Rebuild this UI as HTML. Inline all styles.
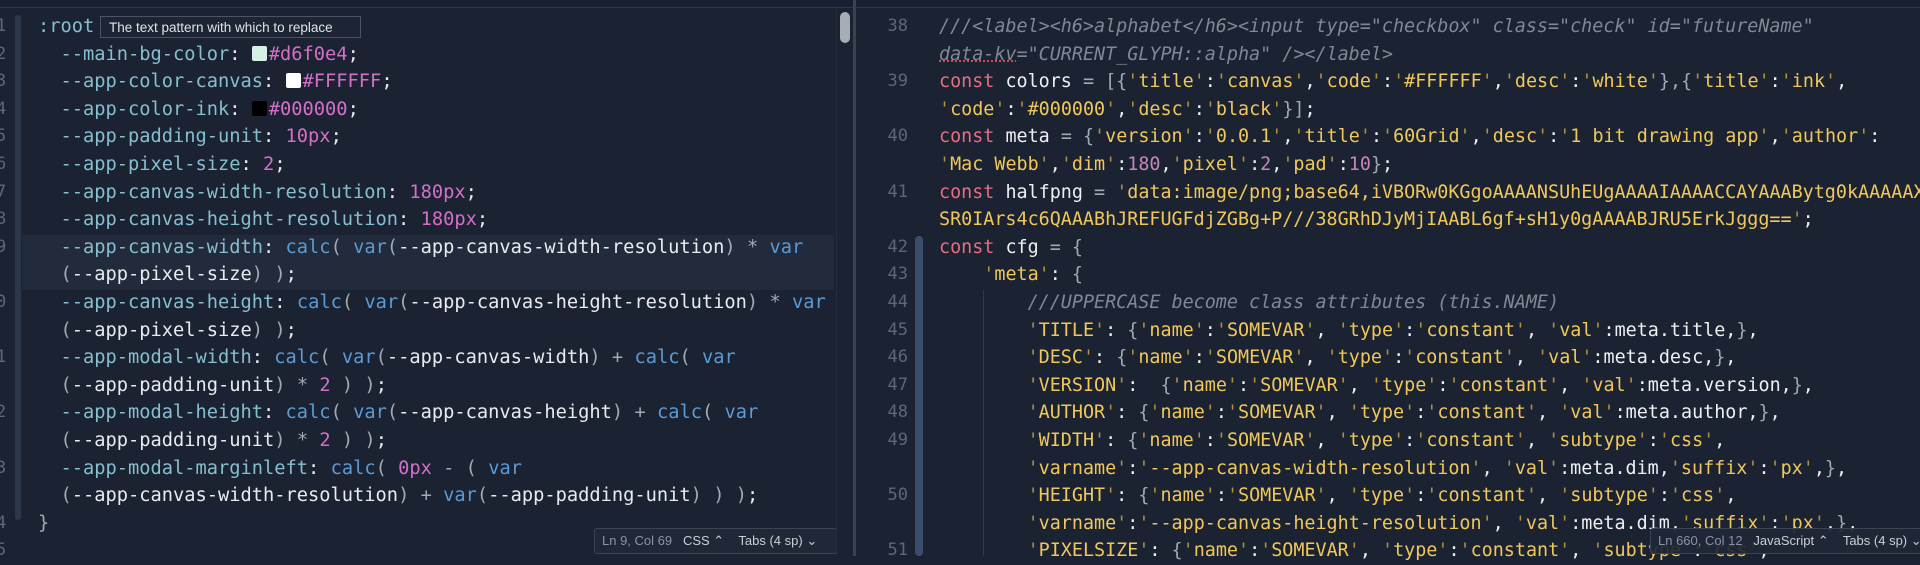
<!DOCTYPE html>
<html><head><meta charset="utf-8"><style>
html,body{margin:0;padding:0;width:1920px;height:556px;overflow:hidden;background:#1b2332;}
.top{position:absolute;left:0;top:0;width:1920px;height:7px;background:#172030;border-bottom:1px solid #2f3847;}
pre{margin:0;position:absolute;font-family:"DejaVu Sans Mono","Liberation Mono",monospace;white-space:pre;}
.clip{position:absolute;left:0;top:0;width:834px;height:556px;overflow:hidden}
.L{left:38px;top:13px;font-size:18.7px;line-height:27.6px;color:#e8ecf0;}
.R{left:939px;top:13px;font-size:18.4px;line-height:27.6px;color:#eef0f2;}
.ln{position:absolute;font-family:"DejaVu Sans Mono",monospace;color:#5c6778;}
.p{color:#86bfd0}.v{color:#d46fc8}.f{color:#5b9bd5}.d{color:#a0aab5}
.k{color:#e86d82}.s{color:#f0c75a}.q{color:#b0913c}.c{color:#7f8896;font-style:italic}.n{color:#c586c0}
.sw{display:inline-block;width:15px;height:15px;border-radius:2px;vertical-align:-1px;margin-right:2px}
.status{position:absolute;height:24px;background:#1f2837;border:1px solid #3a4455;border-radius:3px;font-family:"Liberation Sans",sans-serif;font-size:13px;color:#8a94a3;line-height:24px;white-space:nowrap;overflow:hidden}
.status b{color:#c9cfd7;font-weight:normal}
</style></head><body>
<div class="top"></div>
<div class="clip">
<div style="position:absolute;left:15px;top:15px;width:6px;height:505px;background:#2c3749;border-radius:3px"></div>
<div style="position:absolute;left:22px;top:235px;width:814px;height:55px;background:#212b3b"></div>
<div class="ln" style="left:-4px;top:13px;font-size:17px;line-height:27.6px;white-space:pre">1
2
3
4
5
6
7
8
9

0

1

2

3

4
5</div>
<pre class="L"><span class="p">:root</span>
  <span class="p">--main-bg-color</span>: <span class="sw" style="background:#d6f0e4"></span><span class="v">#d6f0e4</span>;
  <span class="p">--app-color-canvas</span>: <span class="sw" style="background:#fff"></span><span class="v">#FFFFFF</span>;
  <span class="p">--app-color-ink</span>: <span class="sw" style="background:#000"></span><span class="v">#000000</span>;
  <span class="p">--app-padding-unit</span>: <span class="v">10px</span>;
  <span class="p">--app-pixel-size</span>: <span class="v">2</span>;
  <span class="p">--app-canvas-width-resolution</span>: <span class="v">180px</span>;
  <span class="p">--app-canvas-height-resolution</span>: <span class="v">180px</span>;
  <span class="p">--app-canvas-width</span>: <span class="f">calc</span><span class="d">(</span> <span class="f">var</span><span class="d">(</span>--app-canvas-width-resolution<span class="d">)</span> <span class="d">*</span> <span class="f">var</span>
  <span class="d">(</span>--app-pixel-size<span class="d">)</span> <span class="d">)</span>;
  <span class="p">--app-canvas-height</span>: <span class="f">calc</span><span class="d">(</span> <span class="f">var</span><span class="d">(</span>--app-canvas-height-resolution<span class="d">)</span> <span class="d">*</span> <span class="f">var</span>
  <span class="d">(</span>--app-pixel-size<span class="d">)</span> <span class="d">)</span>;
  <span class="p">--app-modal-width</span>: <span class="f">calc</span><span class="d">(</span> <span class="f">var</span><span class="d">(</span>--app-canvas-width<span class="d">)</span> <span class="d">+</span> <span class="f">calc</span><span class="d">(</span> <span class="f">var</span>
  <span class="d">(</span>--app-padding-unit<span class="d">)</span> <span class="d">*</span> <span class="v">2</span> <span class="d">)</span> <span class="d">)</span>;
  <span class="p">--app-modal-height</span>: <span class="f">calc</span><span class="d">(</span> <span class="f">var</span><span class="d">(</span>--app-canvas-height<span class="d">)</span> <span class="d">+</span> <span class="f">calc</span><span class="d">(</span> <span class="f">var</span>
  <span class="d">(</span>--app-padding-unit<span class="d">)</span> <span class="d">*</span> <span class="v">2</span> <span class="d">)</span> <span class="d">)</span>;
  <span class="p">--app-modal-marginleft</span>: <span class="f">calc</span><span class="d">(</span> <span class="v">0px</span> <span class="d">-</span> <span class="d">(</span> <span class="f">var</span>
  <span class="d">(</span>--app-canvas-width-resolution<span class="d">)</span> <span class="d">+</span> <span class="f">var</span><span class="d">(</span>--app-padding-unit<span class="d">)</span> <span class="d">)</span> <span class="d">)</span>;
<span class="d">}</span></pre>
</div>
<div style="position:absolute;left:100px;top:16px;width:261px;height:22px;background:#1d2535;border:1px solid #4a5466;font-family:'Liberation Sans',sans-serif;font-size:13.5px;color:#dfe3e8;line-height:22px;padding-left:8px;box-sizing:border-box;white-space:nowrap">The text pattern with which to replace</div>
<div class="status" style="left:594px;top:528px;width:234px;padding-left:7px">Ln 9, Col 69 &nbsp; <b>CSS ⌃</b> &nbsp;&nbsp; <b>Tabs (4 sp) ⌄</b></div>
<div style="position:absolute;left:836px;top:8px;width:1px;height:548px;background:#242d3c"></div>
<div style="position:absolute;left:840px;top:12px;width:10px;height:31px;background:#a6adb5;border-radius:5px"></div>
<div style="position:absolute;left:853px;top:0;width:3px;height:556px;background:#394250"></div>
<div style="position:absolute;left:915px;top:236px;width:8px;height:320px;background:#3a4e6c;border-radius:4px"></div>
<div style="position:absolute;left:983px;top:290px;width:1px;height:266px;background:#2f3a4b"></div>
<div class="ln" style="left:870px;top:13px;font-size:17px;line-height:27.6px;white-space:pre;width:38px;text-align:right">38

39

40

41

42
43
44
45
46
47
48
49

50

51</div>
<pre class="R"><span class="c">///&lt;label&gt;&lt;h6&gt;alphabet&lt;/h6&gt;&lt;input type="checkbox" class="check" id="futureName"</span>
<span class="c" style="text-decoration:underline dotted #e05050">data-kv</span><span class="c">="CURRENT_GLYPH::alpha" /&gt;&lt;/label&gt;</span>
<span class="k">const</span> colors <span class="d">=</span> <span class="d">[{</span><span class="q">'</span><span class="s">title</span><span class="q">'</span>:<span class="q">'</span><span class="s">canvas</span><span class="q">'</span>,<span class="q">'</span><span class="s">code</span><span class="q">'</span>:<span class="q">'</span><span class="s">#FFFFFF</span><span class="q">'</span>,<span class="q">'</span><span class="s">desc</span><span class="q">'</span>:<span class="q">'</span><span class="s">white</span><span class="q">'</span><span class="d">},{</span><span class="q">'</span><span class="s">title</span><span class="q">'</span>:<span class="q">'</span><span class="s">ink</span><span class="q">'</span>,
<span class="q">'</span><span class="s">code</span><span class="q">'</span>:<span class="q">'</span><span class="s">#000000</span><span class="q">'</span>,<span class="q">'</span><span class="s">desc</span><span class="q">'</span>:<span class="q">'</span><span class="s">black</span><span class="q">'</span><span class="d">}]</span>;
<span class="k">const</span> meta <span class="d">=</span> <span class="d">{</span><span class="q">'</span><span class="s">version</span><span class="q">'</span>:<span class="q">'</span><span class="s">0.0.1</span><span class="q">'</span>,<span class="q">'</span><span class="s">title</span><span class="q">'</span>:<span class="q">'</span><span class="s">60Grid</span><span class="q">'</span>,<span class="q">'</span><span class="s">desc</span><span class="q">'</span>:<span class="q">'</span><span class="s">1 bit drawing app</span><span class="q">'</span>,<span class="q">'</span><span class="s">author</span><span class="q">'</span>:
<span class="q">'</span><span class="s">Mac Webb</span><span class="q">'</span>,<span class="q">'</span><span class="s">dim</span><span class="q">'</span>:<span class="n">180</span>,<span class="q">'</span><span class="s">pixel</span><span class="q">'</span>:<span class="n">2</span>,<span class="q">'</span><span class="s">pad</span><span class="q">'</span>:<span class="n">10</span><span class="d">}</span>;
<span class="k">const</span> halfpng <span class="d">=</span> <span class="q">'</span><span class="s">data:image/png;base64,iVBORw0KGgoAAAANSUhEUgAAAAIAAAACCAYAAABytg0kAAAAAX</span>
<span class="s">SR0IArs4c6QAAABhJREFUGFdjZGBg+P///38GRhDJyMjIAABL6gf+sH1y0gAAAABJRU5ErkJggg==</span><span class="q">'</span>;
<span class="k">const</span> cfg <span class="d">=</span> <span class="d">{</span>
    <span class="q">'</span><span class="s">meta</span><span class="q">'</span>: <span class="d">{</span>
        <span class="c">///UPPERCASE become class attributes (this.NAME)</span>
        <span class="q">'</span><span class="s">TITLE</span><span class="q">'</span>: <span class="d">{</span><span class="q">'</span><span class="s">name</span><span class="q">'</span>:<span class="q">'</span><span class="s">SOMEVAR</span><span class="q">'</span>, <span class="q">'</span><span class="s">type</span><span class="q">'</span>:<span class="q">'</span><span class="s">constant</span><span class="q">'</span>, <span class="q">'</span><span class="s">val</span><span class="q">'</span>:meta.title,<span class="d">}</span>,
        <span class="q">'</span><span class="s">DESC</span><span class="q">'</span>: <span class="d">{</span><span class="q">'</span><span class="s">name</span><span class="q">'</span>:<span class="q">'</span><span class="s">SOMEVAR</span><span class="q">'</span>, <span class="q">'</span><span class="s">type</span><span class="q">'</span>:<span class="q">'</span><span class="s">constant</span><span class="q">'</span>, <span class="q">'</span><span class="s">val</span><span class="q">'</span>:meta.desc,<span class="d">}</span>,
        <span class="q">'</span><span class="s">VERSION</span><span class="q">'</span>:  <span class="d">{</span><span class="q">'</span><span class="s">name</span><span class="q">'</span>:<span class="q">'</span><span class="s">SOMEVAR</span><span class="q">'</span>, <span class="q">'</span><span class="s">type</span><span class="q">'</span>:<span class="q">'</span><span class="s">constant</span><span class="q">'</span>, <span class="q">'</span><span class="s">val</span><span class="q">'</span>:meta.version,<span class="d">}</span>,
        <span class="q">'</span><span class="s">AUTHOR</span><span class="q">'</span>: <span class="d">{</span><span class="q">'</span><span class="s">name</span><span class="q">'</span>:<span class="q">'</span><span class="s">SOMEVAR</span><span class="q">'</span>, <span class="q">'</span><span class="s">type</span><span class="q">'</span>:<span class="q">'</span><span class="s">constant</span><span class="q">'</span>, <span class="q">'</span><span class="s">val</span><span class="q">'</span>:meta.author,<span class="d">}</span>,
        <span class="q">'</span><span class="s">WIDTH</span><span class="q">'</span>: <span class="d">{</span><span class="q">'</span><span class="s">name</span><span class="q">'</span>:<span class="q">'</span><span class="s">SOMEVAR</span><span class="q">'</span>, <span class="q">'</span><span class="s">type</span><span class="q">'</span>:<span class="q">'</span><span class="s">constant</span><span class="q">'</span>, <span class="q">'</span><span class="s">subtype</span><span class="q">'</span>:<span class="q">'</span><span class="s">css</span><span class="q">'</span>,
        <span class="q">'</span><span class="s">varname</span><span class="q">'</span>:<span class="q">'</span><span class="s">--app-canvas-width-resolution</span><span class="q">'</span>, <span class="q">'</span><span class="s">val</span><span class="q">'</span>:meta.dim,<span class="q">'</span><span class="s">suffix</span><span class="q">'</span>:<span class="q">'</span><span class="s">px</span><span class="q">'</span>,<span class="d">}</span>,
        <span class="q">'</span><span class="s">HEIGHT</span><span class="q">'</span>: <span class="d">{</span><span class="q">'</span><span class="s">name</span><span class="q">'</span>:<span class="q">'</span><span class="s">SOMEVAR</span><span class="q">'</span>, <span class="q">'</span><span class="s">type</span><span class="q">'</span>:<span class="q">'</span><span class="s">constant</span><span class="q">'</span>, <span class="q">'</span><span class="s">subtype</span><span class="q">'</span>:<span class="q">'</span><span class="s">css</span><span class="q">'</span>,
        <span class="q">'</span><span class="s">varname</span><span class="q">'</span>:<span class="q">'</span><span class="s">--app-canvas-height-resolution</span><span class="q">'</span>, <span class="q">'</span><span class="s">val</span><span class="q">'</span>:meta.dim,<span class="q">'</span><span class="s">suffix</span><span class="q">'</span>:<span class="q">'</span><span class="s">px</span><span class="q">'</span>,<span class="d">}</span>,
        <span class="q">'</span><span class="s">PIXELSIZE</span><span class="q">'</span>: <span class="d">{</span><span class="q">'</span><span class="s">name</span><span class="q">'</span>:<span class="q">'</span><span class="s">SOMEVAR</span><span class="q">'</span>, <span class="q">'</span><span class="s">type</span><span class="q">'</span>:<span class="q">'</span><span class="s">constant</span><span class="q">'</span>, <span class="q">'</span><span class="s">subtype</span><span class="q">'</span>:<span class="q">'</span><span class="s">css</span><span class="q">'</span>,</pre>
<div class="status" style="left:1650px;top:528px;width:280px;padding-left:7px;background:rgba(31,40,55,0.92)">Ln 660, Col 12 &nbsp; <b>JavaScript ⌃</b> &nbsp;&nbsp; <b>Tabs (4 sp) ⌄</b></div>
</body></html>
